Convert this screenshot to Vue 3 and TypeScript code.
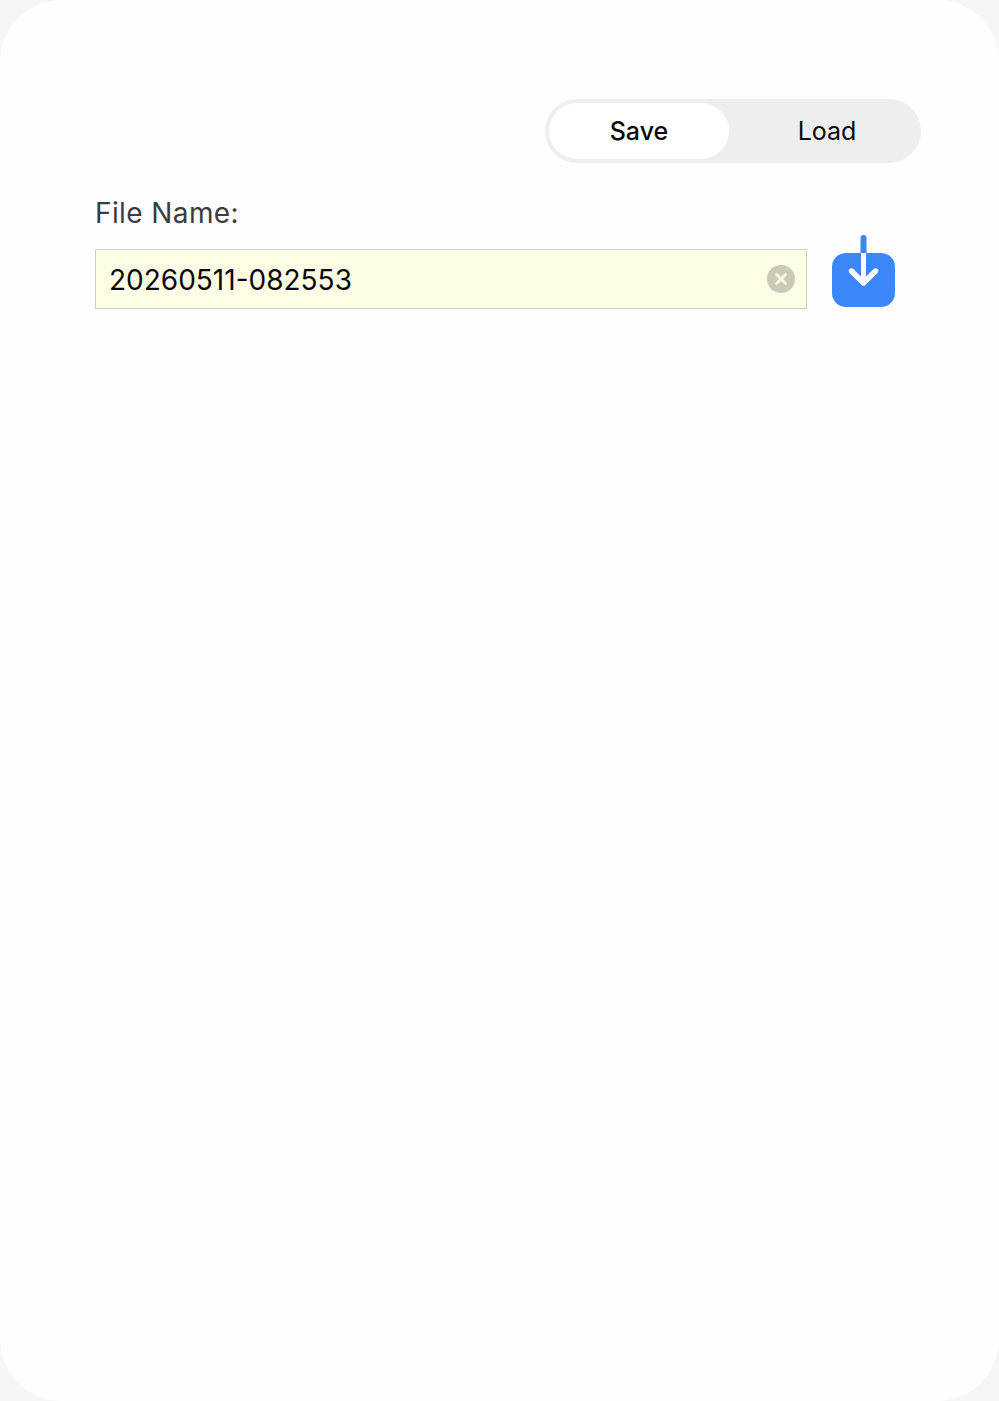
<script setup lang="ts">
const fileName: string = '20260511-082553'
</script>

<template>
  <div class="window">
    <div class="tabs-row">
      <div class="tabs">
        <div class="tab active">Save</div>
        <div class="tab">Load</div>
      </div>
    </div>
    <div class="label">File Name:</div>
    <div class="row">
      <div class="field">
        <span class="value">{{ fileName }}</span>
        <svg class="clear" width="28" height="28" viewBox="0 0 28 28">
          <circle cx="14" cy="14" r="14" fill="#cbcab8" />
          <path d="M9.5 9.5 L18.5 18.5 M18.5 9.5 L9.5 18.5" stroke="#fdfce5" stroke-width="2.6" stroke-linecap="round" />
        </svg>
      </div>
      <svg class="save" width="63" height="72" viewBox="0 0 63 72">
        <rect x="0" y="18" width="63" height="54" rx="14" fill="#3b86f8" />
        <path d="M31.5 3 V18" stroke="#3b86f8" stroke-width="6" stroke-linecap="round" />
        <path d="M31.5 18 V47" stroke="#fff" stroke-width="5" />
        <path d="M19.5 36 L31.5 48 L43.5 36" fill="none" stroke="#fff" stroke-width="5.4" stroke-linecap="round" stroke-linejoin="round" />
      </svg>
    </div>
  </div>
</template>

<style>
html, body {
  margin: 0;
  background: #f6f6f6;
}
</style>

<style scoped>
.window {
  box-sizing: border-box;
  width: 999px;
  height: 1401px;
  padding: 99px 78px 0 95px;
  background: #fefefe;
  border-radius: 62px;
  font-family: Inter, "Liberation Sans", sans-serif;
}
.tabs-row {
  display: flex;
  justify-content: flex-end;
}
.tabs {
  box-sizing: border-box;
  display: flex;
  width: 376px;
  height: 64px;
  padding: 4px;
  border-radius: 32px;
  background: #eeeeee;
}
.tab {
  width: 180px;
  display: flex;
  align-items: center;
  justify-content: center;
  border-radius: 28px;
  font-size: 25px;
  color: #0a0a0a;
}
.tab + .tab {
  box-sizing: border-box;
  width: 188px;
  padding-left: 8px;
}
.active {
  background: #ffffff;
  font-weight: 500;
}
.label {
  margin-top: 32px;
  font-size: 28px;
  line-height: 36px;
  letter-spacing: 0.4px;
  color: #3c3c3c;
}
.row {
  display: flex;
  align-items: flex-end;
  gap: 25px;
  margin-top: 4px;
}
.field {
  box-sizing: border-box;
  display: flex;
  align-items: center;
  justify-content: space-between;
  width: 712px;
  height: 60px;
  margin-bottom: -2px;
  padding: 0 11px 0 13px;
  background: #fdfce5;
  border: 1px solid #d0cfb7;
  font-size: 28px;
  color: #0a0a0a;
}
.value {
  padding-top: 2px;
}
.save {
  display: block;
}
</style>
